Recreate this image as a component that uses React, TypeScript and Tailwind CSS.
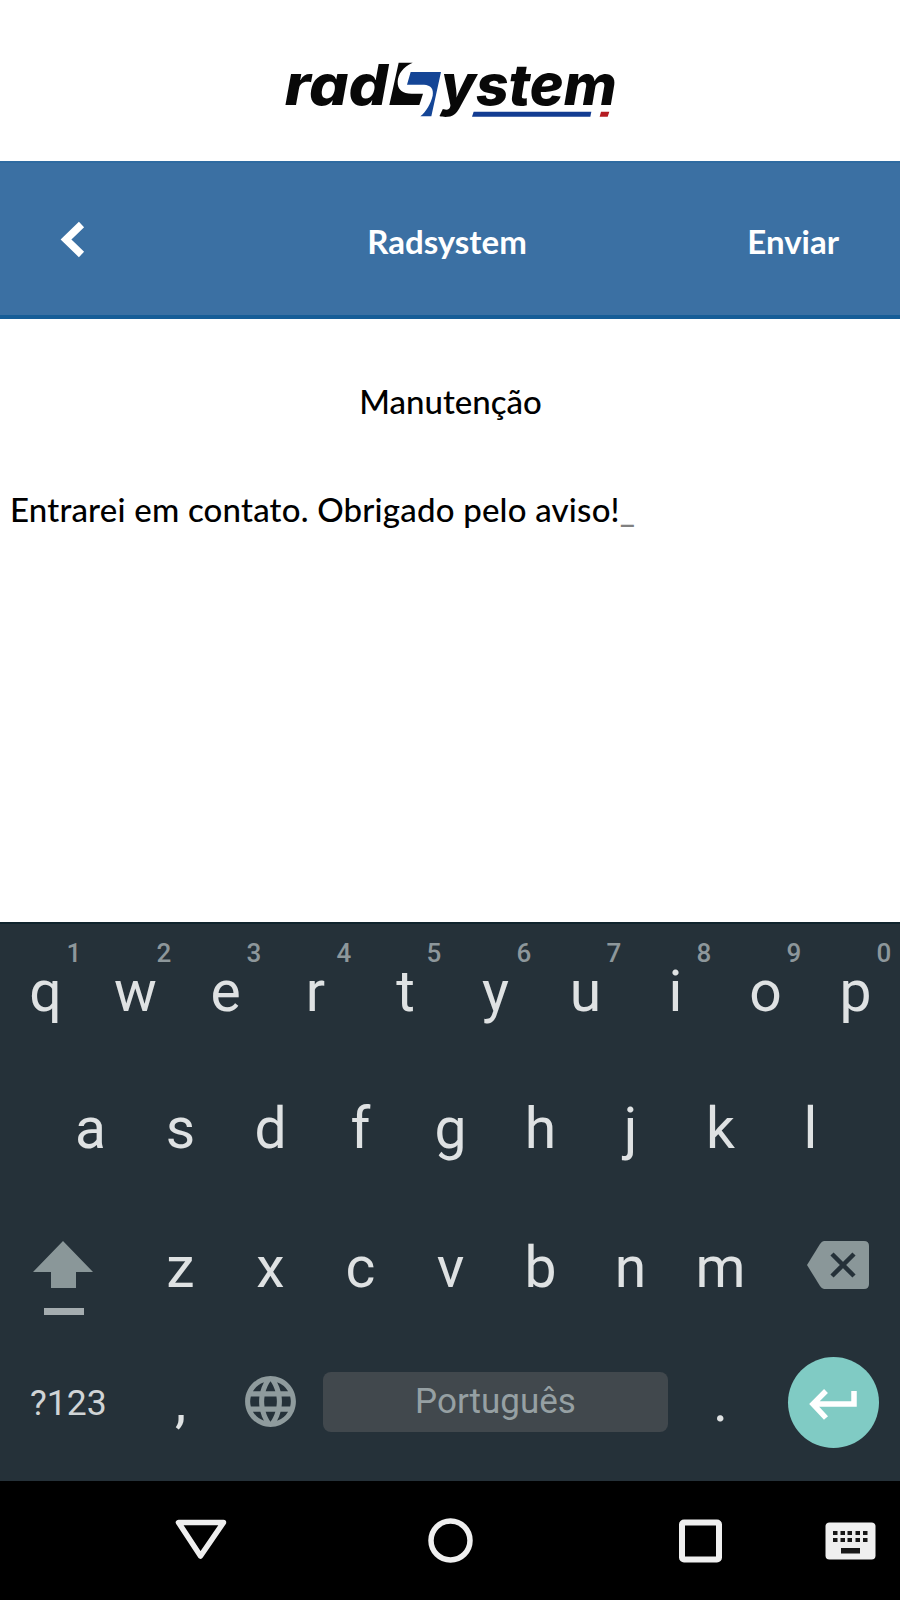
import React from 'react';
import { MdLanguage } from 'react-icons/md';

const numberRow = [
  ['q', '1'], ['w', '2'], ['e', '3'], ['r', '4'], ['t', '5'],
  ['y', '6'], ['u', '7'], ['i', '8'], ['o', '9'], ['p', '0'],
];
const middleRow = ['a', 's', 'd', 'f', 'g', 'h', 'j', 'k', 'l'];
const bottomRow = ['z', 'x', 'c', 'v', 'b', 'n', 'm'];

const Logo: React.FC = () => (
  <svg className="w-[360px] h-20 overflow-visible" viewBox="0 0 1080 240" role="img" aria-label="radsystem">
    <g fontFamily="Inter, sans-serif" fontWeight="800" fontStyle="italic" fontSize="170" fill="#080808">
      <text x="44" y="166" textLength="310" lengthAdjust="spacingAndGlyphs">rad</text>
      <text x="512" y="166" textLength="528" lengthAdjust="spacingAndGlyphs">ystem</text>
    </g>
    {/* two-tone S mark */}
    <path d="M386 38H428C398 52 384 72 383 95C382 119 398 131 425 131H459L448 165H358Z" fill="#080808" />
    <path d="M422 66H513L484 199H451C469 184 482 161 488 137C492 116 482 105 462 104H411Z" fill="#144596" />
    <path d="M611 185H964L961 200H606Z" fill="#123c92" />
    <path d="M993 185H1018L1013 200H989Z" fill="#b51c22" />
  </svg>
);

const Key: React.FC<{ label: string; hint?: string }> = ({ label, hint }) => (
  <div className="relative flex w-[90px] h-full items-center justify-center pl-px pb-[2px] text-[57px] leading-none text-[#dfe2e3]">
    {label}
    {hint && (
      <span className="absolute top-4 left-[60px] w-7 text-center text-[26px] font-medium leading-none text-[#8d979b]">
        {hint}
      </span>
    )}
  </div>
);

const ShiftIcon = () => (
  <svg className="w-[60px] h-[76px]" viewBox="0 0 60 76">
    <path d="M30 0L60 31H43V47H18V31H0Z" fill="#8a9799" />
    <path d="M11 67H51V74H11Z" fill="#a4acaf" />
  </svg>
);

const BackspaceIcon = () => (
  <svg className="w-[62px] h-12" viewBox="0 0 62 48">
    <path d="M17 0H57Q62 0 62 5V43Q62 48 57 48H17Q15 48 13 45L0 24L13 3Q15 0 17 0Z" fill="#8a9799" />
    <path d="M25 13L47 35M47 13L25 35" stroke="#253139" strokeWidth="4.500" />
  </svg>
);

const EnterIcon = () => (
  <svg className="w-[50px] h-8" viewBox="0 0 50 32">
    <path d="M46 3V16H5M18 3L5 16L18 30" fill="none" stroke="#fff" strokeWidth="5.500" />
  </svg>
);

const NavigationBar = () => (
  <nav className="flex h-[119px] bg-black">
    <svg className="w-full h-full" viewBox="0 0 900 119" fill="none" stroke="#efefef" strokeWidth="5.5">
      <path d="M178.500 41.500H223.500L200.500 75Z" strokeLinejoin="round" />
      <circle cx="450.500" cy="59.500" r="19.500" />
      <rect x="682" y="41.500" width="37" height="37" rx="2" strokeWidth="6" />
      <g stroke="none">
        <rect x="825.500" y="41.500" width="50" height="37" rx="4" fill="#efefef" />
        <g fill="#181818">
          {[833, 840.5, 847.5, 855.5, 863].map(x => (
            <React.Fragment key={x}>
              <rect x={x} y="50" width="4.500" height="4" />
              <rect x={x} y="57" width="4.500" height="4" />
            </React.Fragment>
          ))}
          <rect x="841" y="67" width="19" height="5.500" />
        </g>
      </g>
    </svg>
  </nav>
);

const Keyboard = () => (
  <section className="h-[559px] border-t-2 border-[#10242d] bg-[#253139] font-['Roboto',sans-serif]">
    <div className="flex h-[137px]">
      {numberRow.map(([label, hint]) => <Key key={label} label={label} hint={hint} />)}
    </div>
    <div className="flex h-[137px] justify-center">
      {middleRow.map(label => <Key key={label} label={label} />)}
    </div>
    <div className="flex h-[138px]">
      <div className="flex w-[135px] items-center pl-[33px] pt-6"><ShiftIcon /></div>
      <div className="flex pt-[2px]">
        {bottomRow.map(label => <Key key={label} label={label} />)}
      </div>
      <div className="flex w-[135px] items-center pl-[42px] pb-[5px]"><BackspaceIcon /></div>
    </div>
    <div className="flex h-[138px] items-center pb-[6px]">
      <div className="w-[135px] pl-[30px] pt-1 text-[35.5px] leading-none text-[#d0d4d6]">?123</div>
      <Key label="," />
      <div className="flex w-[90px] justify-center pb-px">
        <MdLanguage className="size-[61px] text-[#8f9b9d]" />
      </div>
      <div className="flex w-[360px] justify-center pl-px">
        <div className="flex w-[345px] h-[60px] items-center justify-center rounded-lg bg-[#41484d] pb-px text-[35px] leading-none text-[#96a0a3]">
          Português
        </div>
      </div>
      <Key label="." />
      <div className="flex w-[135px] pl-[22.5px]">
        <div className="flex size-[91px] items-center justify-center rounded-full bg-[#80cbc4] pt-[3px]">
          <EnterIcon />
        </div>
      </div>
    </div>
  </section>
);

const App: React.FC = () => {
  return (
    <div className="flex w-[900px] h-[1600px] flex-col overflow-hidden bg-white font-['Lato',sans-serif] text-black">
      <div className="flex h-[161px] shrink-0 justify-center pt-[50px]">
        <Logo />
      </div>
      <header className="grid h-[158px] shrink-0 grid-cols-3 items-center border-t-2 border-b-4 border-t-[#2f6ba1] border-b-[#165d97] bg-[#3b70a3] text-[33px] font-bold text-white">
        <svg className="ml-[60px] w-[26px] h-[38px]" viewBox="0 0 26 38">
          <path d="M21.500 4.500L6 19.500L21.500 34.500" fill="none" stroke="#fff" strokeWidth="7.500" />
        </svg>
        <h1 className="pr-[6px] pt-[5px] text-center">Radsystem</h1>
        <div className="pr-[61px] pt-[5px] text-right">Enviar</div>
      </header>
      <main className="flex-1 pt-[57px]">
        <h2 className="pl-px text-center text-[33px] font-medium leading-[50px]">Manutenção</h2>
        <p className="mt-[58px] pl-[10px] text-[33px] font-medium leading-[50px] tracking-[0.2px]">
          Entrarei em contato. Obrigado pelo aviso!<span className="text-[#808080]">_</span>
        </p>
      </main>
      <Keyboard />
      <NavigationBar />
    </div>
  );
};

export default App;
